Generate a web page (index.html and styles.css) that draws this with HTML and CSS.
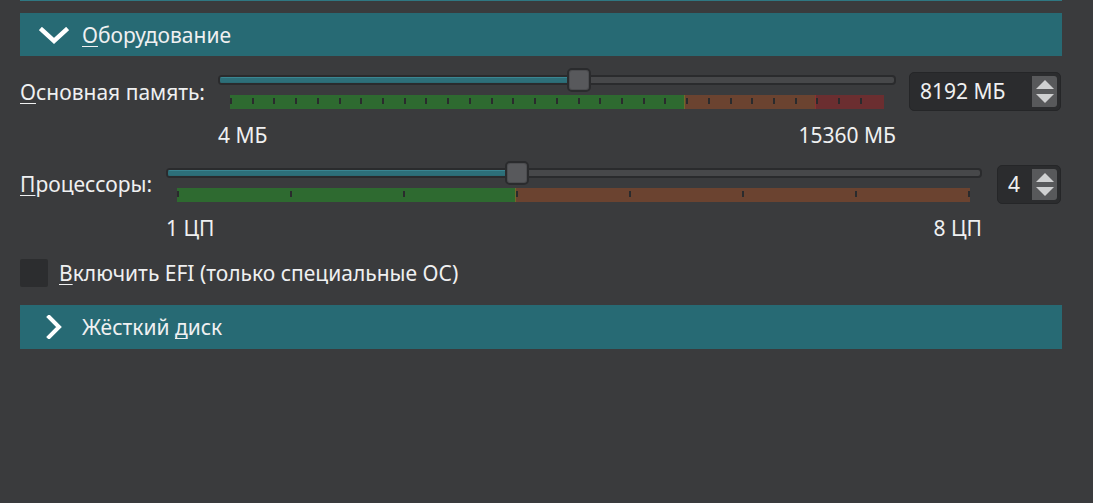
FILE: index.html
```html
<!DOCTYPE html>
<html lang="ru">
<head>
<meta charset="utf-8">
<link rel="stylesheet" href="styles.css">
</head>
<body>
<div class="page">
  <div class="strip"></div>

  <div class="section-header">
    <svg class="chev-down" width="30" height="18" viewBox="0 0 30 18"><path d="M3 3 L15 14 L27 3" fill="none" stroke="#ffffff" stroke-width="4.5" stroke-linecap="square" stroke-linejoin="miter"/></svg>
    <span class="title"><u>О</u>борудование</span>
  </div>

  <div class="row mem-row">
    <div class="row-label mem-label"><u>О</u>сновная память:</div>
    <div class="slider">
      <div class="track-area">
        <div class="groove"><div class="fill" style="width:361px"></div></div>
        <div class="handle" style="left:349px"></div>
      </div>
      <div class="ticks mem-ticks">
        <i></i><i></i><i></i><i></i><i></i><i></i><i></i><i></i><i></i><i></i>
        <i></i><i></i><i></i><i></i><i></i><i></i><i></i><i></i><i></i><i></i>
        <i></i><i></i><i></i><i></i><i></i><i></i><i></i><i></i><i></i><i></i>
        <i class="hidden"></i>
      </div>
      <div class="scale-labels"><span>4 МБ</span><span>15360 МБ</span></div>
    </div>
    <div class="spinbox mem-spin">
      <span class="spin-value">8192 МБ</span>
      <div class="spin-buttons">
        <span class="arrow-up"></span>
        <span class="arrow-down"></span>
      </div>
    </div>
  </div>

  <div class="row cpu-row">
    <div class="row-label cpu-label"><u>П</u>роцессоры:</div>
    <div class="slider">
      <div class="track-area">
        <div class="groove"><div class="fill" style="width:350px"></div></div>
        <div class="handle" style="left:339px"></div>
      </div>
      <div class="ticks cpu-ticks">
        <i></i><i></i><i></i><i></i><i></i><i></i><i></i><i></i>
      </div>
      <div class="scale-labels"><span>1 ЦП</span><span>8 ЦП</span></div>
    </div>
    <div class="spinbox cpu-spin">
      <span class="spin-value">4</span>
      <div class="spin-buttons">
        <span class="arrow-up"></span>
        <span class="arrow-down"></span>
      </div>
    </div>
  </div>

  <div class="check-row">
    <span class="checkbox"></span>
    <span class="check-label"><u>В</u>ключить EFI (только специальные ОС)</span>
  </div>

  <div class="section-header closed">
    <svg class="chev-right" width="28" height="24" viewBox="0 0 28 24"><path d="M9 2 L19 12 L9 22" fill="none" stroke="#ffffff" stroke-width="4" stroke-linecap="square" stroke-linejoin="miter"/></svg>
    <span class="title">Жёсткий <u>д</u>иск</span>
  </div>
</div>
</body>
</html>
```

FILE: styles.css
```css
* { box-sizing: border-box; }
html, body {
  margin: 0;
  padding: 0;
  background: #3a3b3d;
  width: 1093px;
  height: 503px;
  overflow: hidden;
}
body {
  font-family: "Noto Sans", "DejaVu Sans", sans-serif;
  font-size: 21px;
  color: #eff0f1;
}
u {
  text-decoration-thickness: 1px;
  text-underline-offset: 3px;
}
.page {
  margin-left: 20px;
  width: 1042px;
  display: flex;
  flex-direction: column;
}
.strip {
  height: 1px;
  background: #2f7782;
}
.section-header {
  margin-top: 12px;
  height: 43px;
  background: #276a74;
  display: flex;
  align-items: center;
  padding-left: 19px;
}
.section-header .title {
  margin-left: 13px;
  line-height: 28px;
}
.section-header.closed {
  margin-top: 18px;
  height: 44px;
  padding-left: 20px;
}
.section-header.closed .title { margin-left: 14px; }
.chev-down { display: block; margin-top: 2px; }
.chev-right { display: block; }

.row {
  display: flex;
  align-items: flex-start;
  margin-top: 12px;
}
.row-label {
  line-height: 28px;
  margin-top: 10px;
}
.mem-label { flex: 0 0 198px; }
.cpu-label { flex: 0 0 146px; margin-top: 9px; }

.slider {
  flex: 1;
  display: flex;
  flex-direction: column;
}
.mem-row .slider { flex: 0 0 678px; }
.cpu-row .slider { flex: 0 0 816px; }

.track-area {
  position: relative;
  height: 24px;
  display: flex;
  align-items: center;
}
.groove {
  width: 100%;
  height: 10px;
  background: #47484a;
  border: 2px solid #2a2b2d;
  border-radius: 4px;
  overflow: hidden;
}
.fill {
  height: 100%;
  background: #2d6f79;
  box-shadow: inset 0 1px 0 #3a8591, inset 0 -1px 0 #2b6a73;
}
.handle {
  position: absolute;
  top: 0;
  width: 24px;
  height: 24px;
  background: #58595c;
  border: 2px solid #2a2b2d;
  border-radius: 5px;
  box-shadow: inset 0 0 0 1px #4c4d50;
}

.ticks {
  margin: 3px 12px 0 12px;
  height: 14px;
  display: flex;
  justify-content: space-between;
  align-items: flex-start;
  padding-top: 3px;
}
.cpu-ticks { margin-left: 11px; margin-right: 12px; }
.ticks i {
  display: block;
  width: 2px;
  height: 6px;
  background: #2a2b2d;
}
.ticks i.hidden { visibility: hidden; }
.mem-ticks {
  background: linear-gradient(to right,
    #2e6a30 0, #2e6a30 454px,
    #6f6a2a 454px, #6f6a2a 455px,
    #6b4330 455px, #6b4330 585px,
    #8a3230 585px, #8a3230 586px,
    #6b2e30 586px, #6b2e30 100%);
}
.cpu-ticks {
  background: linear-gradient(to right,
    #2e6a30 0, #2e6a30 338px,
    #6f6a2a 338px, #6f6a2a 339px,
    #6b4330 339px, #6b4330 100%);
}

.scale-labels {
  margin-top: 12px;
  line-height: 28px;
  display: flex;
  justify-content: space-between;
}

.spinbox {
  margin-top: 4px;
  height: 39px;
  background: #2b2c2e;
  border: 1px solid #252628;
  border-radius: 5px;
  display: flex;
  align-items: stretch;
  padding: 3px 3px 3px 0;
}
.mem-spin { margin-left: 13px; flex: 0 0 152px; }
.cpu-spin { margin-left: 15px; flex: 0 0 64px; }
.spin-value {
  flex: 1;
  line-height: 31px;
  padding-left: 10px;
  white-space: nowrap;
}
.spin-buttons {
  flex: 0 0 25px;
  background: #58595b;
  border-radius: 0 3px 3px 0;
  display: flex;
  flex-direction: column;
  align-items: center;
  justify-content: center;
  gap: 5px;
}
.arrow-up, .arrow-down {
  display: block;
  width: 0;
  height: 0;
  border-left: 9px solid transparent;
  border-right: 9px solid transparent;
}
.arrow-up { border-bottom: 9px solid #cfd0d1; }
.arrow-down { border-top: 9px solid #cfd0d1; }

.check-row {
  margin-top: 17px;
  display: flex;
  align-items: center;
  height: 28px;
}
.checkbox {
  width: 28px;
  height: 28px;
  background: #2c2d2f;
  border-radius: 2px;
}
.check-label {
  margin-left: 11px;
  line-height: 28px;
}
```
